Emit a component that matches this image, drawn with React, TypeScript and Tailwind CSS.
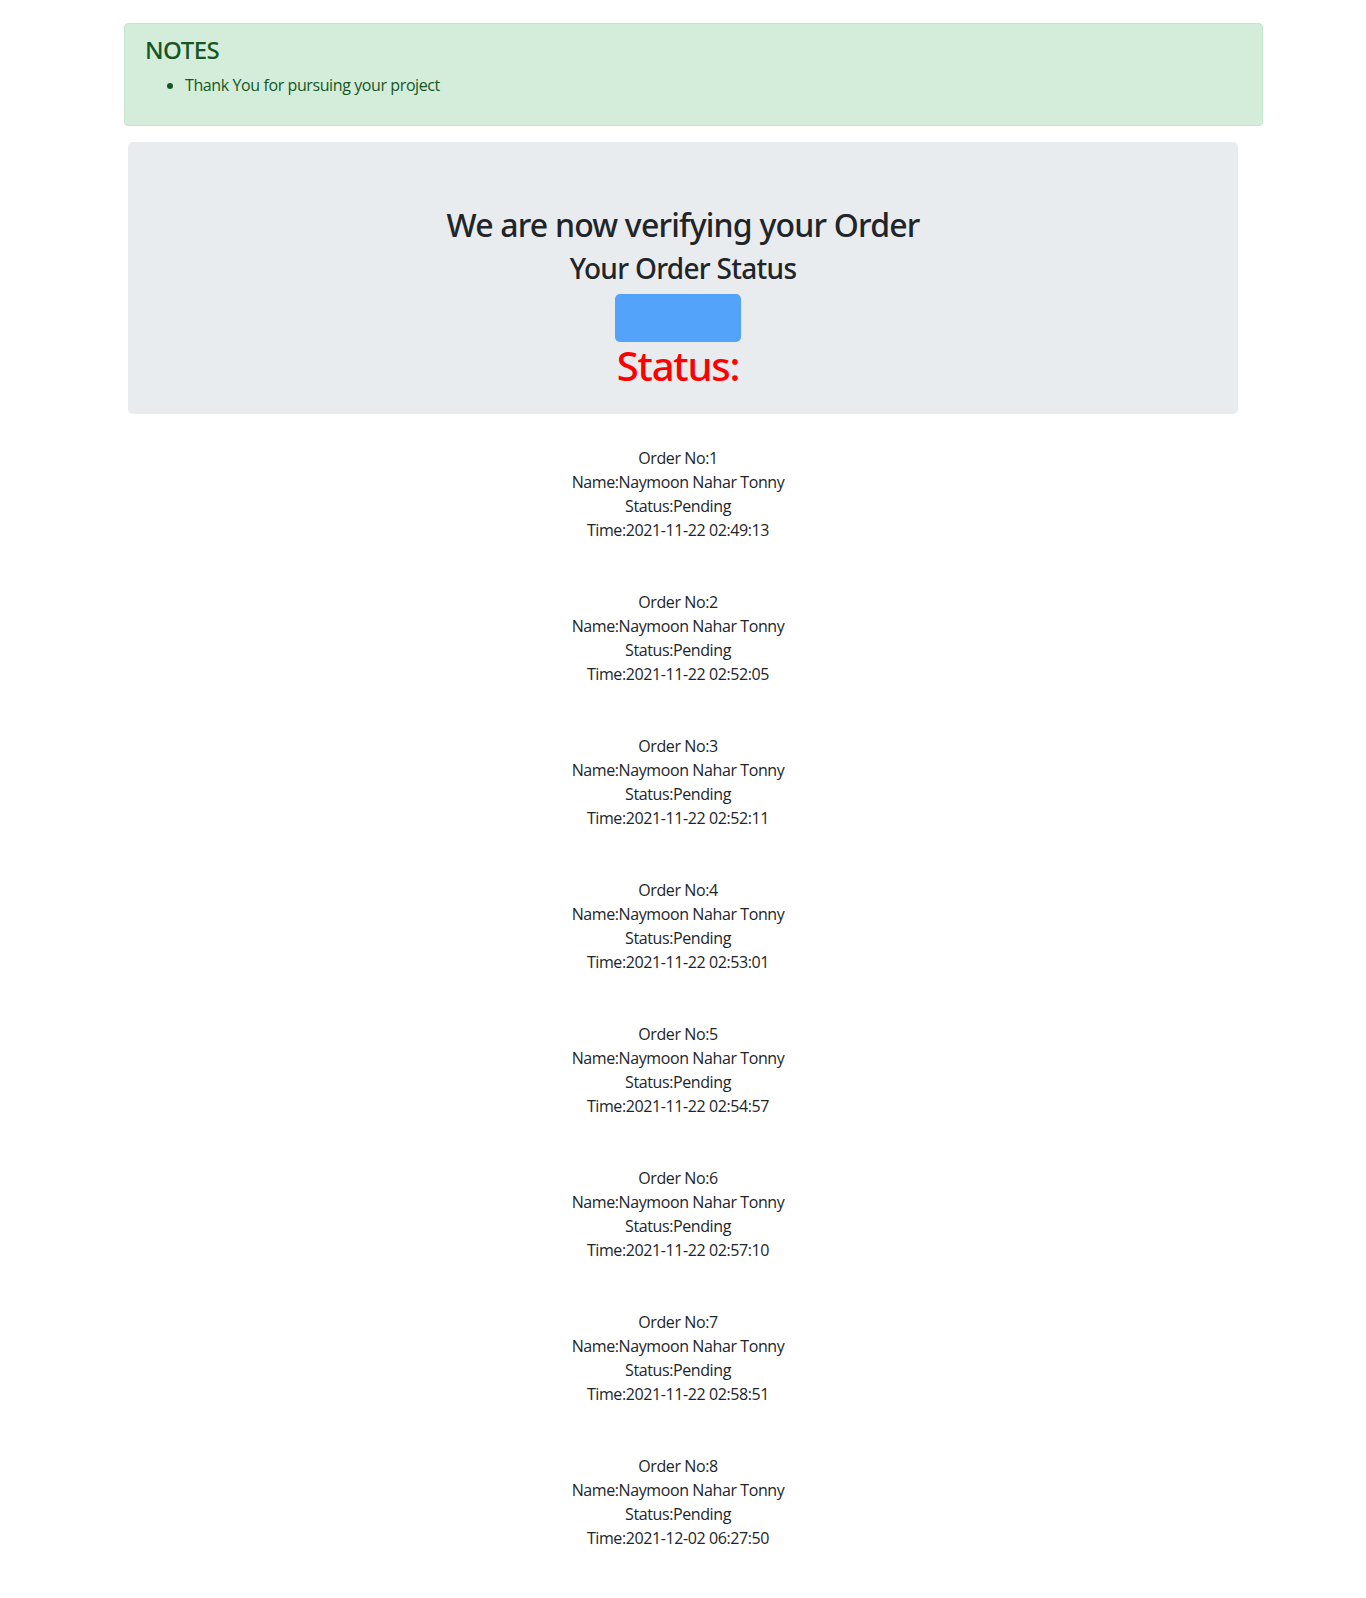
const orders = [
  { no: 1, time: "2021-11-22 02:49:13" },
  { no: 2, time: "2021-11-22 02:52:05" },
  { no: 3, time: "2021-11-22 02:52:11" },
  { no: 4, time: "2021-11-22 02:53:01" },
  { no: 5, time: "2021-11-22 02:54:57" },
  { no: 6, time: "2021-11-22 02:57:10" },
  { no: 7, time: "2021-11-22 02:58:51" },
  { no: 8, time: "2021-12-02 06:27:50" },
];

export default function App() {
  return (
    <div className="min-h-[1598px] bg-white font-['Open_Sans',sans-serif] text-[#212529] text-base leading-6 tracking-[-0.4px]">
      <div className="pt-[23px]">
        {/* notes alert */}
        <div className="ml-[124px] w-[1139px] rounded border border-[#c3e6cb] bg-[#d4edda] px-5 py-3 text-[#155724]">
          <h4 className="mb-2 font-['Noto_Sans',sans-serif] text-2xl leading-[28.8px] font-medium tracking-[-0.5px]">NOTES</h4>
          <ul className="mb-4 list-disc pl-10">
            <li>Thank You for pursuing your project</li>
          </ul>
        </div>

        {/* verifying box */}
        <div className="ml-[128px] mt-4 w-[1110px] rounded-[5px] bg-[#e9ecef] pt-16 pb-6 text-center font-['Noto_Sans',sans-serif]">
          <h2 className="mb-2 text-[32px] leading-[38.4px] font-medium tracking-[-0.8px]">We are now verifying your Order</h2>
          <h3 className="mb-2 text-[28px] leading-[33.6px] font-medium tracking-[-0.7px]">Your Order Status</h3>
          <div className="flex flex-col items-center pr-[10px]">
            <button className="h-12 w-[126px] rounded-[5px] bg-[#52a3f9]"></button>
            <h1 className="text-[40px] leading-[48px] font-medium tracking-[-1.2px] text-[#ff0000]">Status:</h1>
          </div>
        </div>

        {/* orders */}
        <div className="mt-8 flex flex-col items-center pr-[10px] text-center">
          {orders.map((o) => (
            <div key={o.no} className="pb-12">
              <p>Order No:{o.no}</p>
              <p>Name:Naymoon Nahar Tonny</p>
              <p>Status:Pending</p>
              <p>Time:{o.time}</p>
            </div>
          ))}
        </div>
      </div>
    </div>
  );
}
